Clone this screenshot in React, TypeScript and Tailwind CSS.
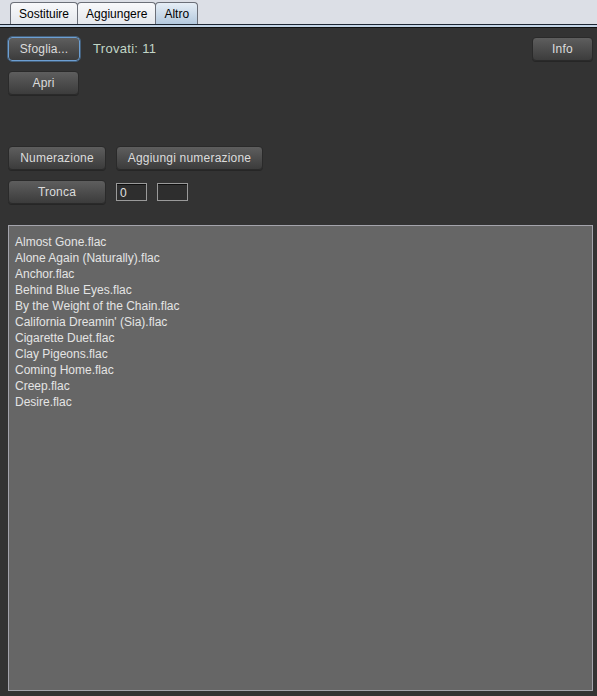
import React from 'react'

const files = [
  'Almost Gone.flac',
  'Alone Again (Naturally).flac',
  'Anchor.flac',
  'Behind Blue Eyes.flac',
  'By the Weight of the Chain.flac',
  "California Dreamin' (Sia).flac",
  'Cigarette Duet.flac',
  'Clay Pigeons.flac',
  'Coming Home.flac',
  'Creep.flac',
  'Desire.flac',
]

function Tab({ label, active = false }: { label: string; active?: boolean }) {
  return (
    <div
      className={`h-[22px] px-[8px] flex items-center rounded-t-[4px] border border-b-0 border-[#6b6f78] text-[12px] text-black -ml-px first:ml-0 ${
        active ? 'bg-gradient-to-b from-[#e6eef6] to-[#b4c9de]' : 'bg-gradient-to-b from-[#f8f9fb] to-[#e4e7ec]'
      }`}
    >
      {label}
    </div>
  )
}

function Btn({ label, w, focused = false }: { label: string; w: string; focused?: boolean }) {
  return (
    <div
      className={`${w} h-[24px] rounded-[4px] border flex items-center justify-center text-[12px] tracking-[0.2px] text-[#dcdcdc] bg-gradient-to-b from-[#5e5e5e] to-[#3c3c3c] shadow-[0_1px_0_#262626] ${
        focused ? 'border-[#6d9fd2] outline outline-1 outline-[#44607c]' : 'border-[#2a2a2a]'
      }`}
    >
      {label}
    </div>
  )
}

function Field({ value }: { value: string }) {
  return (
    <div className="w-[31px] h-[18px] border border-[#9a9a9a] bg-[#2e2e2e] border-t-2 border-t-[#0e0e0e] outline outline-1 outline-[#9a9a9a] -outline-offset-1 flex items-center px-[3px] text-[12px] text-[#e0e0e0]">
      {value}
    </div>
  )
}

export default function App() {
  return (
    <div className="w-[597px] h-[696px] flex flex-col bg-[#333333] overflow-hidden" style={{ fontFamily: '"Liberation Sans", Arial, sans-serif' }}>
      {/* tab strip */}
      <div className="h-[24px] bg-[#dcdfe6] flex items-end pl-[10px] shrink-0">
        <Tab label="Sostituire" />
        <Tab label="Aggiungere" />
        <Tab label="Altro" active />
      </div>
      <div className="h-px bg-[#1c2633] shrink-0" />
      <div className="h-[2px] bg-[#c3d4e6] shrink-0" />
      <div className="h-px bg-[#111111] shrink-0" />

      {/* body */}
      <div className="flex-1 flex flex-col pl-[8px] pr-[4px] pt-[9px] pb-[5px]">
        <div className="flex items-center">
          <Btn label="Sfoglia..." w="w-[72px]" focused />
          <span className="ml-[13px] text-[13px] tracking-[0.3px] text-[#c2d6c6]">Trovati: 11</span>
          <div className="ml-auto">
            <Btn label="Info" w="w-[61px]" />
          </div>
        </div>
        <div className="mt-[10px]">
          <Btn label="Apri" w="w-[71px]" />
        </div>

        <div className="flex items-center gap-[10px] mt-[51px]">
          <Btn label="Numerazione" w="w-[98px]" />
          <Btn label="Aggiungi numerazione" w="w-[147px]" />
        </div>
        <div className="flex items-center mt-[10px]">
          <Btn label="Tronca" w="w-[98px]" />
          <div className="ml-[10px] flex gap-[10px]">
            <Field value="0" />
            <Field value="" />
          </div>
        </div>

        <div className="mt-[21px] flex-1 border border-[#a4a4ac] bg-[#666666] pt-[8px] pl-[6px]">
          {files.map((f) => (
            <div key={f} className="h-[16px] leading-[16px] text-[12px] text-[#e4e4e4]">
              {f}
            </div>
          ))}
        </div>
      </div>
    </div>
  )
}
